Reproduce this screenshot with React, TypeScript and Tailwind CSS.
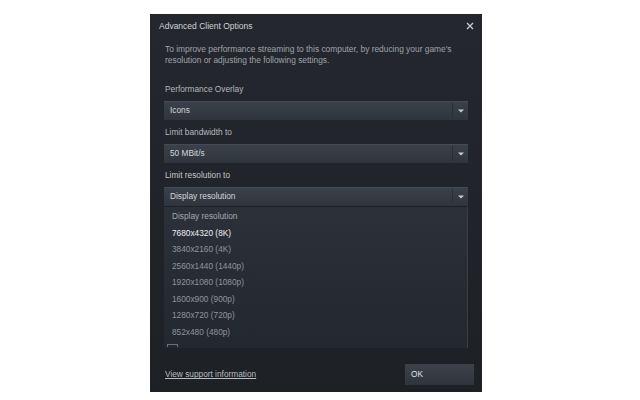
import React from "react";

function Arrow() {
  return (
    <svg width="6" height="4" viewBox="0 0 6 4" className="block">
      <path d="M0 0.5 L6 0.5 L3 3.5 Z" fill="#c9cdd2" />
    </svg>
  );
}

function Select({ value }: { value: string }) {
  return (
    <div className="h-[19px] flex items-center bg-gradient-to-b from-[#3b414a] to-[#30353d] shadow-[inset_0_1px_0_#454b55]">
      <span className="flex-1 pl-[6px] text-[8.3px] text-[#d3d6da]">{value}</span>
      <div className="w-px h-[15px] bg-[#2a2e35]" />
      <div className="w-[15px] flex items-center justify-center">
        <Arrow />
      </div>
    </div>
  );
}

const items = [
  "Display resolution",
  "7680x4320 (8K)",
  "3840x2160 (4K)",
  "2560x1440 (1440p)",
  "1920x1080 (1080p)",
  "1600x900 (900p)",
  "1280x720 (720p)",
  "852x480 (480p)",
];

export default function App() {
  return (
    <div
      className="w-[640px] h-[400px] bg-white pt-[14px] pl-[150px]"
      style={{ fontFamily: '"Liberation Sans", Arial, sans-serif' }}
    >
      <div className="w-[332px] h-[378px] bg-gradient-to-b from-[#24272d] to-[#1d2025] flex flex-col">
        <div className="h-[23px] flex items-center justify-between pl-[9px] pr-[8px] pt-[1px]">
          <span className="text-[8.5px] text-[#d0d2d5]">Advanced Client Options</span>
          <svg width="8" height="8" viewBox="0 0 8 8">
            <path d="M1 1 L7 7 M7 1 L1 7" stroke="#c9ccd0" strokeWidth="1.3" />
          </svg>
        </div>
        <div className="px-[15px] pt-[7px] text-[8.4px] leading-[11px] text-[#9ea3aa]">
          To improve performance streaming to this computer, by reducing your game's resolution or
          adjusting the following settings.
        </div>
        <div className="px-[14px] pt-[17px] flex flex-col">
          <div className="h-[12px] pl-[1px] flex items-center text-[8.3px] text-[#b4b8bd]">Performance Overlay</div>
          <div className="h-[6px]" />
          <Select value="Icons" />
          <div className="h-[6px]" />
          <div className="h-[12px] pl-[1px] flex items-center text-[8.3px] text-[#b4b8bd]">Limit bandwidth to</div>
          <div className="h-[6px]" />
          <Select value="50 MBit/s" />
          <div className="h-[6px]" />
          <div className="h-[12px] pl-[1px] flex items-center text-[8.3px] text-[#c4c7cb]">Limit resolution to</div>
          <div className="h-[6px]" />
          <Select value="Display resolution" />
          <div className="h-[142px] overflow-hidden bg-gradient-to-b from-[#2c3139] to-[#23272e] border-t border-[#1d2025] border-r border-r-[#3a3f47] pt-[1px]">
            {items.map((it, i) => (
              <div
                key={it}
                className={`h-[16.5px] flex items-center pl-[8px] text-[8.3px] ${
                  i === 1 ? "text-[#eef0f2]" : i === 0 ? "text-[#a4a9b0]" : "text-[#8f959d]"
                }`}
              >
                {it}
              </div>
            ))}
            <div className="ml-[3px] mt-[4px] w-[11px] h-[3px] border-t border-x border-[#6b7078]" />
          </div>
        </div>
        <div className="flex-1" />
        <div className="flex items-center justify-between pl-[15px] pr-[8px] pb-[7px]">
          <span className="text-[8.3px] text-[#b9bdc2] underline underline-offset-[1px]">View support information</span>
          <div className="w-[69px] h-[21px] bg-gradient-to-b from-[#3c414a] to-[#30353d] flex items-center pl-[6px] text-[8.3px] text-[#dfe1e4]">
            OK
          </div>
        </div>
      </div>
    </div>
  );
}
